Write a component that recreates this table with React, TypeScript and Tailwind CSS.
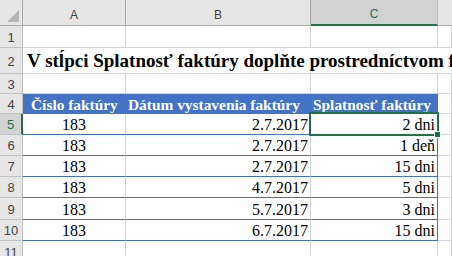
import React from "react";

type DataRow = { row: number; date: string; due: string };

const dataRows: DataRow[] = [
  { row: 5, date: "2.7.2017", due: "2 dni" },
  { row: 6, date: "2.7.2017", due: "1 deň" },
  { row: 7, date: "2.7.2017", due: "15 dni" },
  { row: 8, date: "4.7.2017", due: "5 dni" },
  { row: 9, date: "5.7.2017", due: "3 dni" },
  { row: 10, date: "6.7.2017", due: "15 dni" },
];

const gridCell = "border-r border-b border-[#d4d4d4] bg-white";
const serifText =
  "font-['Liberation_Serif','Times_New_Roman',serif] text-[16px] leading-none text-black";

function RowHead({ n, active = false }: { n: number; active?: boolean }) {
  return active ? (
    <div className="flex items-center justify-center border-b border-b-[#bfbfbf] border-r-2 border-r-[#217346] bg-[#d2d2d2] pt-[2px] font-['Liberation_Sans',Arial,sans-serif] text-[13px] text-[#217346]">
      {n}
    </div>
  ) : (
    <div className="flex items-center justify-center border-b border-r border-[#bfbfbf] bg-[#e6e6e6] pt-[2px] font-['Liberation_Sans',Arial,sans-serif] text-[13px] text-[#444444]">
      {n}
    </div>
  );
}

function ColHead({ label, active = false }: { label: string; active?: boolean }) {
  return active ? (
    <div className="flex items-center justify-center border-b-2 border-b-[#217346] border-r border-r-[#bfbfbf] bg-[#d2d2d2] pt-[4px] font-['Liberation_Sans',Arial,sans-serif] text-[12px] text-[#217346]">
      {label}
    </div>
  ) : (
    <div className="flex items-center justify-center border-b border-r border-[#ababab] bg-[#e6e6e6] pt-[4px] font-['Liberation_Sans',Arial,sans-serif] text-[12px] text-[#444444]">
      {label}
    </div>
  );
}

function Corner() {
  return (
    <div className="relative border-b border-r border-[#ababab] bg-[#e6e6e6]">
      <svg width="23" height="26" viewBox="0 0 23 26" className="absolute left-0 top-0">
        <polygon points="19,10 19,22 7,22" fill="#b5b5b5" />
      </svg>
    </div>
  );
}

export default function App() {
  return (
    <div className="relative h-[256px] w-[452px] overflow-hidden bg-white">
      <div className="grid h-full grid-cols-[23px_103px_185px_127px_1fr] grid-rows-[26px_22px_26px_20px_20px_21px_21px_21px_21px_22px_21px_1fr]">
        {/* column letters */}
        <Corner />
        <ColHead label="A" />
        <ColHead label="B" />
        <ColHead label="C" active />
        <div className="border-b border-[#ababab] bg-[#e6e6e6]" />

        {/* row 1 */}
        <RowHead n={1} />
        <div className={gridCell} />
        <div className={gridCell} />
        <div className={gridCell} />
        <div className={gridCell} />

        {/* row 2: title overflowing across columns */}
        <RowHead n={2} />
        <div className="col-span-4 flex items-end overflow-hidden whitespace-nowrap border-b border-[#d4d4d4] bg-white pb-[3px] pl-[4px] font-['Liberation_Serif','Times_New_Roman',serif] text-[19px] font-bold leading-none text-black">
          V stĺpci Splatnosť faktúry doplňte prostredníctvom funkcie
        </div>

        {/* row 3 */}
        <RowHead n={3} />
        <div className={gridCell} />
        <div className={gridCell} />
        <div className={gridCell} />
        <div className={gridCell} />

        {/* row 4: table header */}
        <RowHead n={4} />
        <div className="flex items-end whitespace-nowrap bg-[#4472c4] pb-[2px] pl-[8px] font-['Liberation_Serif','Times_New_Roman',serif] text-[15.4px] font-bold leading-none text-white">
          Číslo faktúry
        </div>
        <div className="flex items-end whitespace-nowrap bg-[#4472c4] pb-[2px] pl-[2px] font-['Liberation_Serif','Times_New_Roman',serif] text-[15.4px] font-bold leading-none text-white">
          Dátum vystavenia faktúry
        </div>
        <div className="flex items-end whitespace-nowrap border-r border-[#4472c4] bg-[#4472c4] pb-[2px] pl-[2px] font-['Liberation_Serif','Times_New_Roman',serif] text-[15.4px] font-bold leading-none text-white">
          Splatnosť faktúry
        </div>
        <div className={gridCell} />

        {/* rows 5-10: table body */}
        {dataRows.map((r) => (
          <React.Fragment key={r.row}>
            <RowHead n={r.row} active={r.row === 5} />
            <div className={`flex items-end justify-center border-b border-r border-b-[#4472c4] border-r-[#d4d4d4] pb-[1px] ${serifText}`}>
              183
            </div>
            <div className={`flex items-end justify-end border-b border-r border-b-[#4472c4] border-r-[#d4d4d4] pb-[1px] pr-[2px] ${serifText}`}>
              {r.date}
            </div>
            <div className={`flex items-end justify-end border-b border-r border-[#4472c4] pb-[1px] pr-[2px] ${serifText}`}>
              {r.due}
            </div>
            <div className={gridCell} />
          </React.Fragment>
        ))}

        {/* row 11 */}
        <RowHead n={11} />
        <div className={gridCell} />
        <div className={gridCell} />
        <div className={gridCell} />
        <div className={gridCell} />
      </div>

      {/* active cell C5 with fill handle */}
      <div className="pointer-events-none absolute left-[309px] top-[112px] h-[24px] w-[130px] border-2 border-[#217346]" />
      <div className="pointer-events-none absolute left-[434px] top-[131px] h-[7px] w-[7px] border border-white bg-[#217346]" />
    </div>
  );
}
